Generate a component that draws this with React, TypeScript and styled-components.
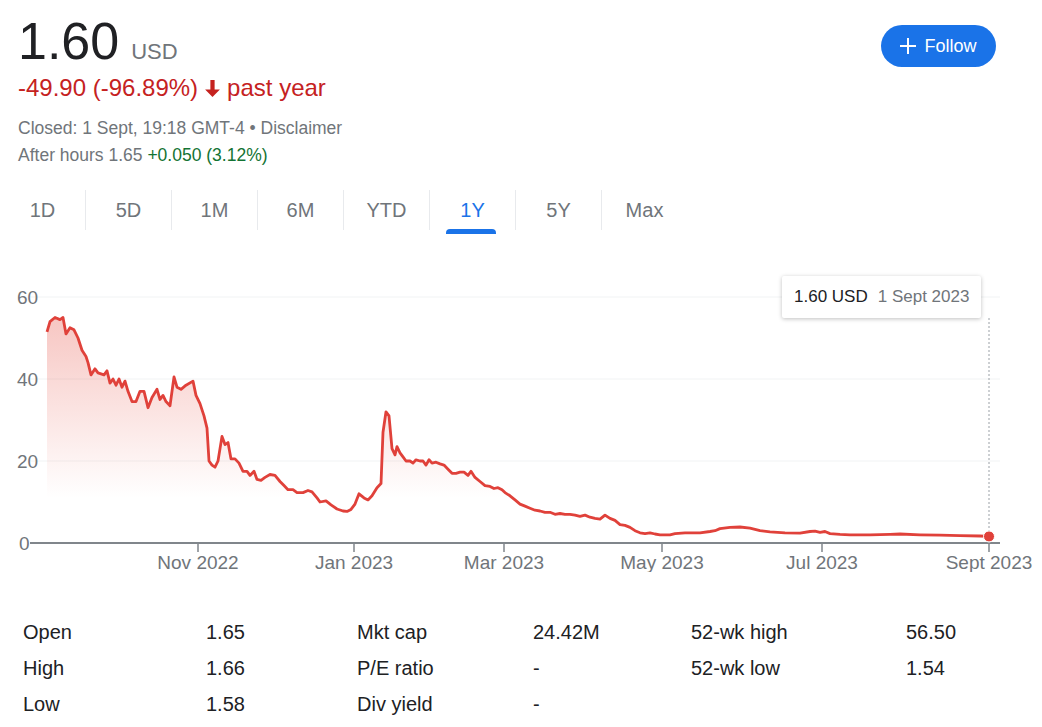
import styled, { createGlobalStyle } from "styled-components";

const Global = createGlobalStyle`
  body { margin: 0; background: #fff; font-family: Arial, "Liberation Sans", sans-serif; }
`;

const Page = styled.div`
  width: 1042px;
  height: 727px;
  position: relative;
  overflow: hidden;
`;

const Header = styled.div`
  display: flex;
  justify-content: space-between;
  padding: 12px 46px 0 18px;
`;

const PriceRow = styled.div`
  display: flex;
  align-items: baseline;
  gap: 12px;
  color: #202124;
`;

const Price = styled.span`
  font-size: 52px;
  line-height: 58px;
`;

const Currency = styled.span`
  font-size: 22px;
  color: #70757a;
`;

const Change = styled.div`
  color: #c5221f;
  font-size: 24px;
  margin-top: 4px;
  display: flex;
  align-items: center;
  gap: 6px;
`;

const Meta = styled.div<{ $top: number }>`
  color: #70757a;
  font-size: 17.5px;
  margin-top: ${(p) => p.$top}px;
`;

const Green = styled.span`
  color: #137333;
`;

const FollowButton = styled.button`
  margin-top: 13px;
  height: 42px;
  width: 115px;
  border: none;
  border-radius: 21px;
  background: #1a73e8;
  color: #fff;
  font: 18px Arial, "Liberation Sans", sans-serif;
  display: flex;
  align-items: center;
  justify-content: center;
  gap: 8px;
`;

const Tabs = styled.div`
  display: flex;
  margin: 24px 0 0 0;
`;

const Tab = styled.div<{ $active?: boolean; $first?: boolean }>`
  width: 85px;
  height: 40px;
  display: flex;
  align-items: center;
  justify-content: center;
  font-size: 20px;
  color: ${(p) => (p.$active ? "#1a73e8" : "#70757a")};
  border-left: ${(p) => (p.$first ? "none" : "1px solid #e8eaed")};
  position: relative;
  &::after {
    content: "";
    display: ${(p) => (p.$active ? "block" : "none")};
    position: absolute;
    bottom: -4px;
    left: 16px;
    right: 19px;
    height: 5px;
    border-radius: 4px 4px 0 0;
    background: #1a73e8;
  }
`;

const ChartWrap = styled.div`
  position: relative;
  height: 340px;
  margin-top: 42px;
`;

const Tooltip = styled.div`
  position: absolute;
  left: 782px;
  top: 4px;
  height: 42px;
  padding: 0 12px;
  display: flex;
  align-items: center;
  gap: 10px;
  background: #fff;
  box-shadow: 0 1px 4px rgba(0, 0, 0, 0.25);
  border-radius: 2px;
  font-size: 17px;
  color: #202124;
`;

const Grey = styled.span`
  color: #70757a;
`;

const Stats = styled.div`
  display: grid;
  grid-template-columns: 183px 151px 176px 158px 215px 100px;
  grid-auto-rows: 36px;
  padding: 2px 0 0 23px;
  font-size: 20px;
  color: #202124;
  align-items: center;
`;

const pts: [number, number][] = [
  [47,51.5],[50,54],[55,55],[60,54.5],[63,55],[66,51],[70,52.5],[74,52],[78,50],[82,47],[86,45.5],[88,44],[91,41],[95,42.5],[98,41.5],[104,41],[107,42],[110,39],[113,40],[116,38.5],[119,40],[122,38],[125,39.5],[128,37],[132,34.5],[136,34.5],[140,37],[144,37],[148,33],[152,35.5],[157,37.5],[160,35],[163,36],[166,34.5],[170,33.5],[174,40.5],[177,38],[181,37.5],[186,38.5],[193,39.5],[196,36],[200,34],[204,31],[207,28],[209,20],[212,19],[215,18.5],[218,20],[222,26],[225,24],[228,24.5],[231,20.5],[235,20.5],[239,19.5],[243,17.5],[247,17.5],[250,16.5],[254,17.5],[257,15.5],[261,15.3],[265,16],[270,16.7],[275,16.5],[280,15],[284,14],[288,13],[293,13],[297,12.3],[303,12.3],[308,12.8],[312,12.5],[317,11],[320,10],[326,10.3],[331,9.3],[337,8.3],[343,7.8],[347,7.7],[351,8.2],[355,9.5],[359,12],[364,11],[368,10.5],[372,11.5],[377,13.5],[381,14.5],[383,27],[386,32],[389,31],[392,23],[395,21.5],[397,23.5],[400,22],[403,21],[406,20],[410,20],[413,19.5],[416,20.3],[420,20],[423,20],[426,19],[429,20.3],[432,19.5],[436,19.7],[440,19.3],[444,19],[448,18],[452,17],[456,17],[460,17.3],[464,17.3],[468,16.5],[471,17.5],[475,16],[480,15],[485,14],[490,13.8],[494,13.3],[498,13.5],[502,13],[505,12.3],[510,11.5],[515,10.5],[520,9.5],[525,9],[530,8.5],[535,8],[540,7.8],[545,7.5],[550,7.5],[555,7],[560,7.2],[565,7],[570,7],[575,6.8],[580,6.5],[585,6.8],[590,6.3],[595,6],[600,5.8],[605,6.8],[610,6],[615,5.5],[620,4.5],[625,4.3],[630,3.8],[635,3],[640,2.5],[645,2.3],[650,2.5],[655,2.2],[660,2],[670,2],[675,2.3],[685,2.5],[700,2.5],[710,2.8],[715,3],[720,3.5],[730,3.8],[740,3.9],[750,3.6],[760,3],[770,2.7],[785,2.5],[800,2.4],[810,2.8],[815,2.9],[820,2.6],[825,2.8],[830,2.3],[840,2.1],[850,2],[870,2],[890,2.1],[900,2.2],[920,2],[940,1.9],[960,1.8],[980,1.7],[989,1.6],
];

const Y0 = 271;
const yOf = (v: number) => Y0 - v * 4.1;
const line = pts.map(([x, v], i) => `${i ? "L" : "M"}${x},${yOf(v).toFixed(1)}`).join(" ");
const area = `${line} L989,${Y0} L47,${Y0} Z`;

const ticks = [
  { x: 198, label: "Nov 2022" },
  { x: 354, label: "Jan 2023" },
  { x: 504, label: "Mar 2023" },
  { x: 662, label: "May 2023" },
  { x: 822, label: "Jul 2023" },
  { x: 989, label: "Sept 2023" },
];

const Chart = () => (
  <svg width="1042" height="300" style={{ display: "block" }}>
    <defs>
      <linearGradient id="fill" x1="0" y1="0" x2="0" y2="1">
        <stop offset="0" stopColor="#e44235" stopOpacity="0.3" />
        <stop offset="0.8" stopColor="#e44235" stopOpacity="0" />
      </linearGradient>
    </defs>
    {[20, 40, 60].map((v) => (
      <line key={v} x1="30" x2="1000" y1={yOf(v)} y2={yOf(v)} stroke="#f1f3f4" />
    ))}
    {[0, 20, 40, 60].map((v) => (
      <text key={v} x={v ? 17 : 19} y={yOf(v) + 7} fontSize="19" fill="#70757a" fontFamily="Arial, Liberation Sans">
        {v}
      </text>
    ))}
    <path d={area} fill="url(#fill)" />
    <line x1="30" x2="1000" y1={Y0} y2={Y0} stroke="#80868b" strokeWidth="2" />
    {ticks.map((t) => (
      <g key={t.label}>
        <line x1={t.x} x2={t.x} y1={Y0} y2={Y0 + 9} stroke="#80868b" strokeWidth="1.5" />
        <text x={t.x} y={Y0 + 26} textAnchor="middle" fontSize="19" fill="#70757a" fontFamily="Arial, Liberation Sans">
          {t.label}
        </text>
      </g>
    ))}
    <line x1="989" x2="989" y1="46" y2={Y0} stroke="#9aa0a6" strokeDasharray="2 2" />
    <path d={line} fill="none" stroke="#e0413a" strokeWidth="2.8" strokeLinejoin="round" />
    <circle cx="989" cy={yOf(1.6)} r="5.5" fill="#e0413a" stroke="#fff" strokeWidth="1" />
  </svg>
);

const stats = [
  ["Open", "1.65", "Mkt cap", "24.42M", "52-wk high", "56.50"],
  ["High", "1.66", "P/E ratio", "-", "52-wk low", "1.54"],
  ["Low", "1.58", "Div yield", "-", "", ""],
];

export default function App() {
  return (
    <Page>
      <Global />
      <Header>
        <div>
          <PriceRow>
            <Price>1.60</Price>
            <Currency>USD</Currency>
          </PriceRow>
          <Change>
            <span>-49.90 (-96.89%)</span>
            <svg width="17" height="19" viewBox="0 0 16 18">
              <path d="M6 1h4v9h5l-7 7-7-7h5z" fill="#c5221f" />
            </svg>
            <span>past year</span>
          </Change>
          <Meta $top={16}>Closed: 1 Sept, 19:18 GMT-4 • Disclaimer</Meta>
          <Meta $top={6}>
            After hours 1.65 <Green>+0.050 (3.12%)</Green>
          </Meta>
        </div>
        <FollowButton>
          <svg width="16" height="16" viewBox="0 0 16 16">
            <path d="M7 0h2v7h7v2H9v7H7V9H0V7h7z" fill="#fff" />
          </svg>
          Follow
        </FollowButton>
      </Header>
      <Tabs>
        {["1D", "5D", "1M", "6M", "YTD", "1Y", "5Y", "Max"].map((t, i) => (
          <Tab key={t} $first={i === 0} $active={t === "1Y"}>
            {t}
          </Tab>
        ))}
      </Tabs>
      <ChartWrap>
        <Chart />
        <Tooltip>
          1.60 USD <Grey>1 Sept 2023</Grey>
        </Tooltip>
      </ChartWrap>
      <Stats>
        {stats.flat().map((c, i) => (
          <div key={i}>{c}</div>
        ))}
      </Stats>
    </Page>
  );
}
